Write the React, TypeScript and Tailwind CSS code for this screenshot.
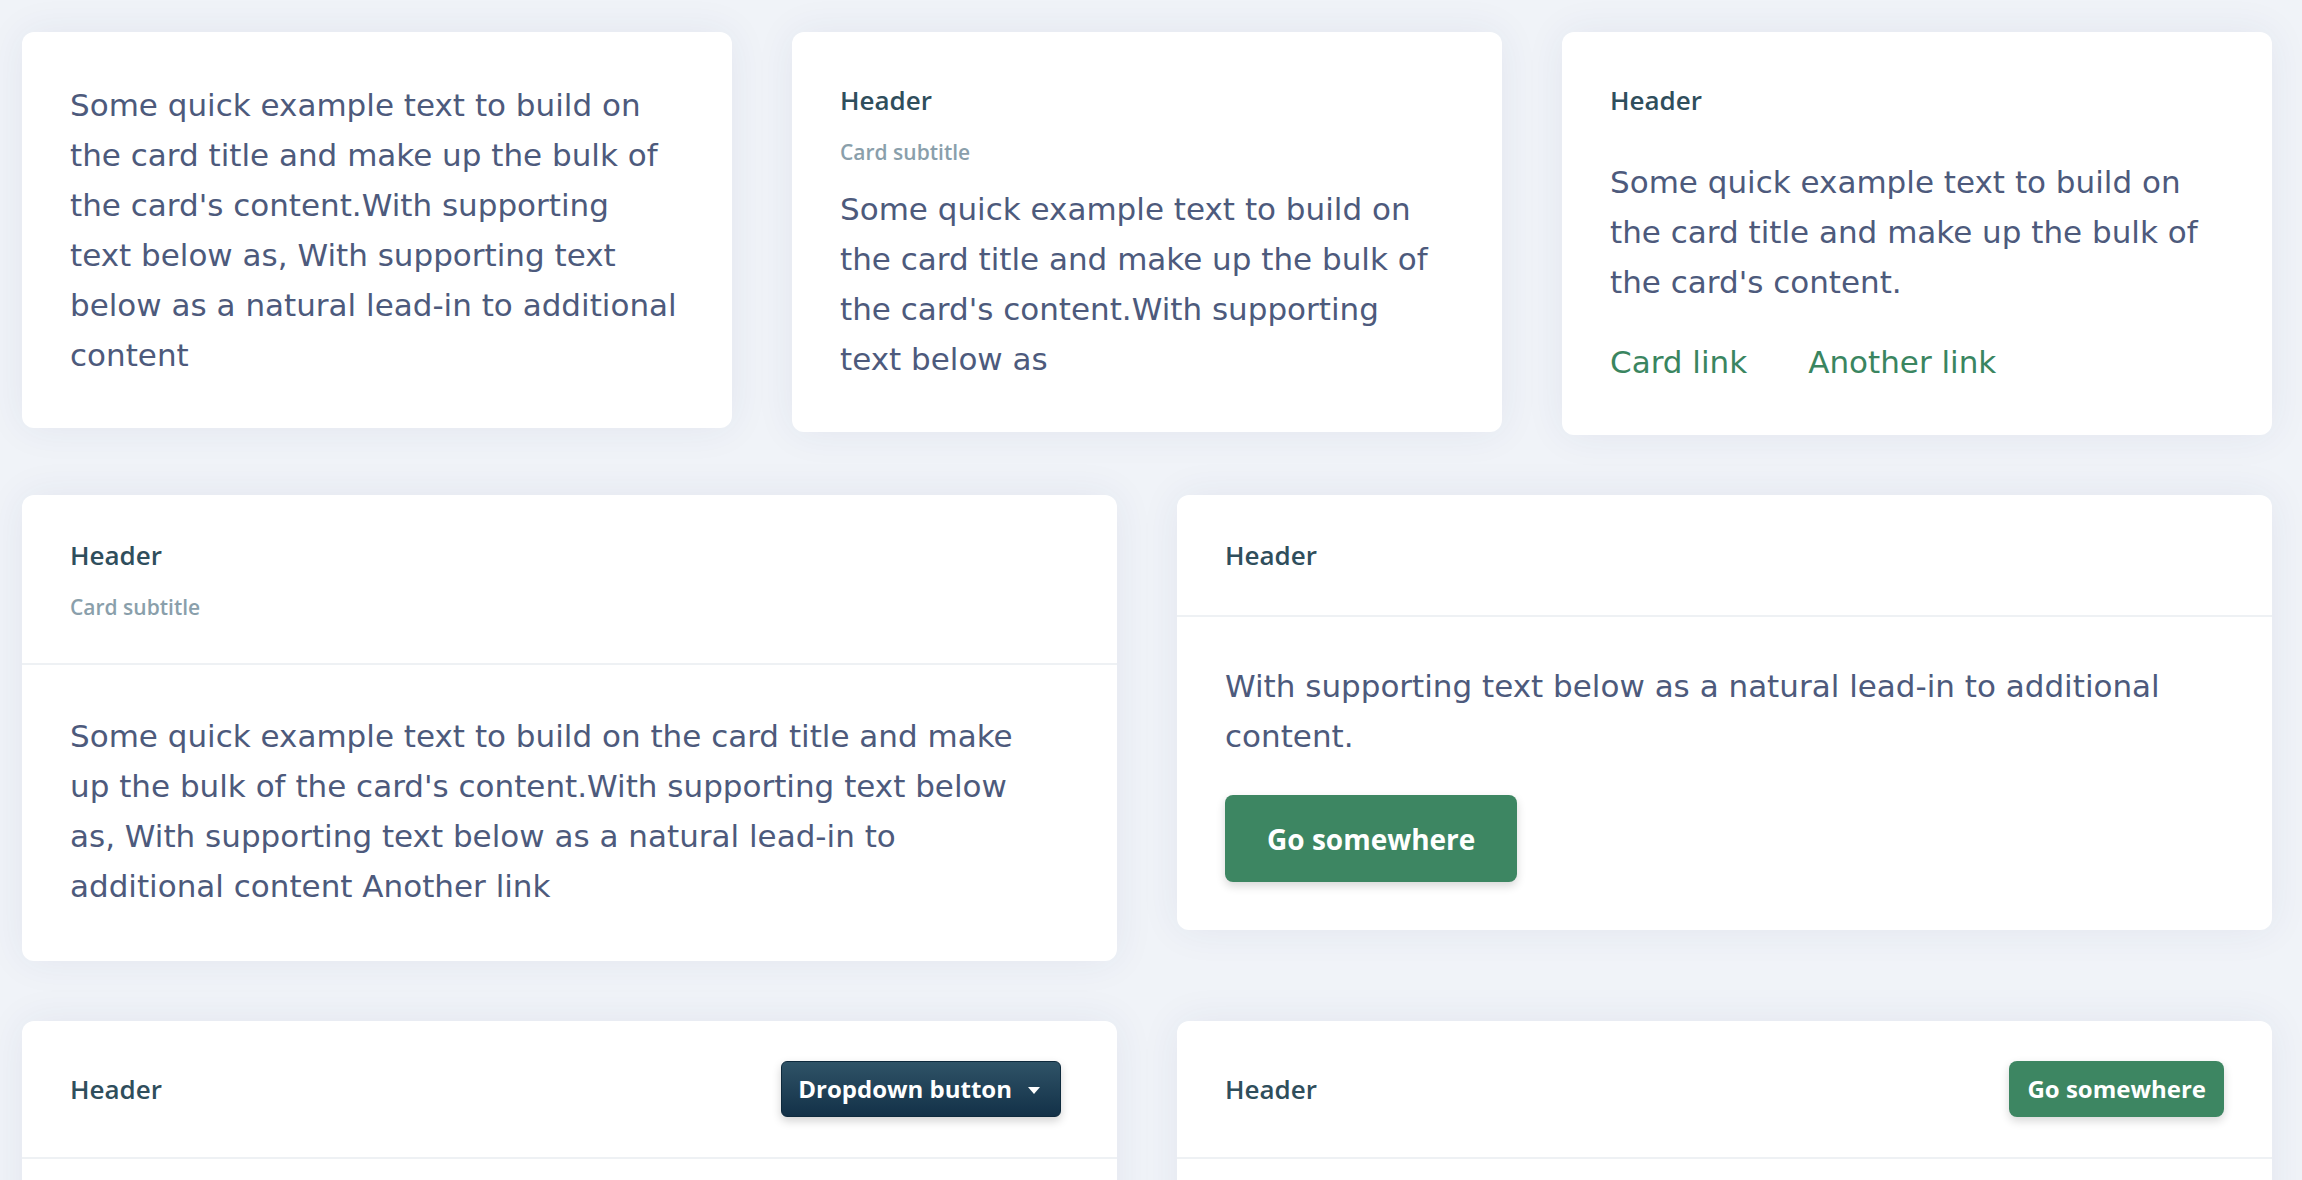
const bodyText = "font-['DejaVu_Sans',sans-serif] text-[31px] leading-[50px] text-[#4d5a7c]";
const headText = "font-['Open_Sans',sans-serif] font-semibold text-[26px] leading-[40px] text-[#2f4e5c]";
const subText = "font-['Open_Sans',sans-serif] font-semibold text-[21px] leading-[32px] text-[#8a9fab]";
const card = 'bg-white rounded-xl shadow-[0_0_40px_rgba(40,60,110,0.07)]';
const btnGreen =
	"font-['Open_Sans',sans-serif] font-bold text-white bg-[#3d8662] rounded-lg shadow-[0_4px_10px_rgba(0,0,0,0.16)] flex items-center";

function App() {
	return (
		<div className="min-h-screen bg-[#f0f3f8] pt-[32px] pb-[60px] pl-[22px] pr-[30px] flex flex-col gap-[60px]">
			{/* row 1 */}
			<div className="grid grid-cols-3 gap-[60px] items-start">
				<div className={`${card} p-[48px]`}>
					<p className={bodyText}>
						Some quick example text to build on
						<br />
						the card title and make up the bulk of
						<br />
						the card's content.With supporting
						<br />
						text below as, With supporting text
						<br />
						below as a natural lead-in to additional
						<br />
						content
					</p>
				</div>

				<div className={`${card} p-[48px]`}>
					<h5 className={headText}>Header</h5>
					<h6 className={`${subText} mt-4 mb-4`}>Card subtitle</h6>
					<p className={bodyText}>
						Some quick example text to build on
						<br />
						the card title and make up the bulk of
						<br />
						the card's content.With supporting
						<br />
						text below as
					</p>
				</div>

				<div className={`${card} p-[48px]`}>
					<h5 className={headText}>Header</h5>
					<p className={`${bodyText} mt-[37px]`}>
						Some quick example text to build on
						<br />
						the card title and make up the bulk of
						<br />
						the card's content.
					</p>
					<div className="mt-[30px] flex gap-[61px] font-['DejaVu_Sans',sans-serif] text-[31px] leading-[50px] text-[#3a8560]">
						<a href="#">Card link</a>
						<a href="#">Another link</a>
					</div>
				</div>
			</div>

			{/* row 2 */}
			<div className="grid grid-cols-2 gap-[60px] items-start">
				<div className={card}>
					<div className="px-[48px] py-[40px] border-b-2 border-[#eef1f4]">
						<h5 className={headText}>Header</h5>
						<h6 className={`${subText} mt-4`}>Card subtitle</h6>
					</div>
					<div className="px-[48px] pt-[46px] pb-[50px]">
						<p className={bodyText}>
							Some quick example text to build on the card title and make
							<br />
							up the bulk of the card's content.With supporting text below
							<br />
							as, With supporting text below as a natural lead-in to
							<br />
							additional content Another link
						</p>
					</div>
				</div>

				<div className={card}>
					<div className="px-[48px] py-[40px] border-b-2 border-[#eef1f4]">
						<h5 className={headText}>Header</h5>
					</div>
					<div className="px-[48px] pt-[44px] pb-[48px]">
						<p className={bodyText}>
							With supporting text below as a natural lead-in to additional content.
						</p>
						<button className={`${btnGreen} mt-[34px] h-[87px] px-[42px] text-[28px]`}>Go somewhere</button>
					</div>
				</div>
			</div>

			{/* row 3 */}
			<div className="grid grid-cols-2 gap-[60px] items-start">
				<div className={card}>
					<div className="px-[48px] py-[40px] border-b-2 border-[#eef1f4] flex items-center justify-between">
						<h5 className={headText}>Header</h5>
						<button className="mr-2 h-[56px] pl-4 pr-5 flex items-center rounded-md border border-[#0e2a3d] bg-gradient-to-b from-[#2f5367] to-[#133148] shadow-[0_4px_10px_rgba(0,0,0,0.18)] font-['Open_Sans',sans-serif] font-bold text-[24px] text-white">
							Dropdown button
							<span className="ml-[16px] mt-[2px] border-x-[6px] border-t-[7px] border-x-transparent border-t-white" />
						</button>
					</div>
					<div className="h-[200px]" />
				</div>

				<div className={card}>
					<div className="px-[48px] py-[40px] border-b-2 border-[#eef1f4] flex items-center justify-between">
						<h5 className={headText}>Header</h5>
						<button className={`${btnGreen} h-[56px] px-[18px] text-[24px]`}>Go somewhere</button>
					</div>
					<div className="h-[200px]" />
				</div>
			</div>
		</div>
	);
}

export default App;
